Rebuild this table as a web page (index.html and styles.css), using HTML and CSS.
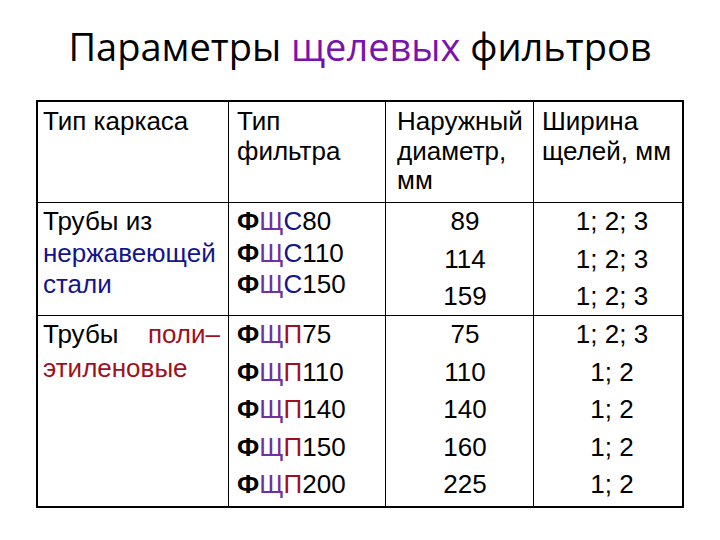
FILE: index.html
```html
<!DOCTYPE html>
<html lang="ru">
<head>
<meta charset="utf-8">
<title>Параметры щелевых фильтров</title>
<link rel="stylesheet" href="styles.css">
</head>
<body>
<h1 class="title">Параметры <span class="purple">щелевых</span> фильтров</h1>
<div class="grid">
  <div class="cell c1 head">
    <div>Тип каркаса</div>
  </div>
  <div class="cell c2 head">
    <div>Тип</div>
    <div>фильтра</div>
  </div>
  <div class="cell c3 head">
    <div>Наружный</div>
    <div>диаметр,</div>
    <div>мм</div>
  </div>
  <div class="cell c4 head last">
    <div>Ширина</div>
    <div>щелей, мм</div>
  </div>

  <div class="cell c1 r1 tight">
    <div>Трубы из</div>
    <div class="navy">нержавеющей</div>
    <div class="navy">стали</div>
  </div>
  <div class="cell c2 r1 tight">
    <div><span class="f">Ф</span><span class="sh">Щ</span><span class="navy">С</span>80</div>
    <div><span class="f">Ф</span><span class="sh">Щ</span><span class="navy">С</span>110</div>
    <div><span class="f">Ф</span><span class="sh">Щ</span><span class="navy">С</span>150</div>
  </div>
  <div class="cell c3 r1 num">
    <div>89</div>
    <div>114</div>
    <div>159</div>
  </div>
  <div class="cell c4 r1 num last">
    <div>1; 2; 3</div>
    <div>1; 2; 3</div>
    <div>1; 2; 3</div>
  </div>

  <div class="cell c1 r2 poly">
    <div class="just">Трубы <span class="red">поли–</span></div>
    <div class="red">этиленовые</div>
  </div>
  <div class="cell c2 r2 wide">
    <div><span class="f">Ф</span><span class="sh">Щ</span><span class="red">П</span>75</div>
    <div><span class="f">Ф</span><span class="sh">Щ</span><span class="red">П</span>110</div>
    <div><span class="f">Ф</span><span class="sh">Щ</span><span class="red">П</span>140</div>
    <div><span class="f">Ф</span><span class="sh">Щ</span><span class="red">П</span>150</div>
    <div><span class="f">Ф</span><span class="sh">Щ</span><span class="red">П</span>200</div>
  </div>
  <div class="cell c3 r2 num">
    <div>75</div>
    <div>110</div>
    <div>140</div>
    <div>160</div>
    <div>225</div>
  </div>
  <div class="cell c4 r2 num last">
    <div>1; 2; 3</div>
    <div>1; 2</div>
    <div>1; 2</div>
    <div>1; 2</div>
    <div>1; 2</div>
  </div>
</div>
</body>
</html>
```

FILE: styles.css
```css
html, body {
  margin: 0;
  padding: 0;
  background: #ffffff;
}
body {
  width: 720px;
  height: 540px;
  overflow: hidden;
  color: #000000;
}
.title {
  margin: 21px 0 0 0;
  font-family: "Open Sans", "Noto Sans", sans-serif;
  font-weight: 400;
  font-size: 38px;
  line-height: 50px;
  text-align: center;
  letter-spacing: 0;
}
.purple {
  color: #7a12ae;
}
.grid {
  margin: 29px 0 0 36px;
  width: 648px;
  box-sizing: border-box;
  border: 2px solid #000;
  display: grid;
  grid-template-columns: 191px 157px 148px 148px;
  grid-template-rows: 101px 113px 190px;
  font-family: "Liberation Sans", Arial, sans-serif;
  font-size: 26px;
}
.cell {
  box-sizing: border-box;
  border-right: 1px solid #000;
  border-bottom: 1px solid #000;
  white-space: nowrap;
}
.cell.last {
  border-right: none;
}
.r2 {
  border-bottom: none;
}
.head {
  padding-top: 5px;
  line-height: 29.5px;
}
.c1 { padding-left: 5px; padding-right: 8px; }
.c2 { padding-left: 8px; }
.c3 { padding-left: 11px; }
.c4 { padding-left: 8px; }
.tight {
  padding-top: 3px;
  line-height: 31.5px;
}
.num {
  text-align: center;
  line-height: 37.5px;
  padding-top: 0;
}
.r2.num, .wide {
  line-height: 37.5px;
}
.poly {
  padding-top: 1px;
  line-height: 34px;
}
.just {
  display: flex;
  justify-content: space-between;
}
.f {
  font-weight: 700;
}
.navy {
  color: #14148c;
}
.sh {
  color: #7030a0;
}
.red {
  color: #a0101c;
}
```
